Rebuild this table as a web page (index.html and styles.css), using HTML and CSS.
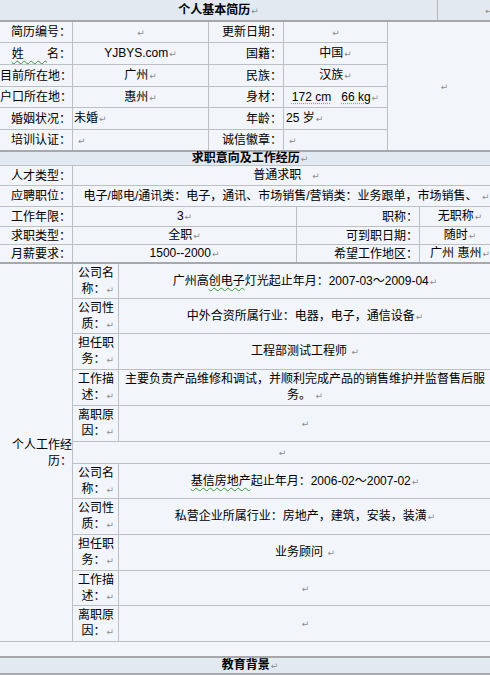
FILE: index.html
```html
<!DOCTYPE html>
<html lang="zh-CN">
<head>
<meta charset="utf-8">
<title>个人基本简历</title>
<link rel="stylesheet" href="styles.css">
</head>
<body>
<div class="doc">
  <div class="head head-first">
    <div class="head-main">个人基本简历<span class="pm">↵</span></div>
    <div class="head-side"><span class="pm">↵</span></div>
  </div>

  <div class="grid g1">
    <div class="c lbl"><p>简历编号：</p></div>
    <div class="c val"><p><span class="pm">↵</span></p></div>
    <div class="c lbl"><p>更新日期：</p></div>
    <div class="c val"><p><span class="pm">↵</span></p></div>
    <div class="c val photo"><p><span class="pm">↵</span></p></div>

    <div class="c lbl"><p><span class="wavy">姓&nbsp;&nbsp;&nbsp;&nbsp;&nbsp;&nbsp;&nbsp;</span>名：</p></div>
    <div class="c val"><p>YJBYS.com<span class="pm">↵</span></p></div>
    <div class="c lbl"><p>国籍：</p></div>
    <div class="c val"><p>中国<span class="pm">↵</span></p></div>

    <div class="c lbl"><p>目前所在地：</p></div>
    <div class="c val"><p>广州<span class="pm">↵</span></p></div>
    <div class="c lbl"><p>民族：</p></div>
    <div class="c val"><p>汉族<span class="pm">↵</span></p></div>

    <div class="c lbl"><p>户口所在地：</p></div>
    <div class="c val"><p>惠州<span class="pm">↵</span></p></div>
    <div class="c lbl"><p>身材：</p></div>
    <div class="c val"><p><span class="dotted">172 cm</span>&nbsp;&nbsp;&nbsp;<span class="dotted">66 kg</span><span class="pm">↵</span></p></div>

    <div class="c lbl"><p>婚姻状况：</p></div>
    <div class="c lft"><p>未婚<span class="pm">↵</span></p></div>
    <div class="c lbl"><p>年龄：</p></div>
    <div class="c lft lft-2"><p>25 岁<span class="pm">↵</span></p></div>

    <div class="c lbl"><p>培训认证：</p></div>
    <div class="c lft lft-4"><p><span class="pm">↵</span></p></div>
    <div class="c lbl"><p>诚信徽章：</p></div>
    <div class="c lft lft-4"><p><span class="pm">↵</span></p></div>
  </div>

  <div class="head head-mid">求职意向及工作经历<span class="pm">↵</span></div>

  <div class="grid g2">
    <div class="c lbl"><p>人才类型：</p></div>
    <div class="c val span3"><p>普通求职&nbsp;&nbsp;&nbsp;<span class="pm">↵</span></p></div>

    <div class="c lbl"><p>应聘职位：</p></div>
    <div class="c val span3"><p>电子/邮电/通讯类：电子，通讯、市场销售/营销类：业务跟单，市场销售、&nbsp;<span class="pm">↵</span></p></div>

    <div class="c lbl"><p>工作年限：</p></div>
    <div class="c val"><p>3<span class="pm">↵</span></p></div>
    <div class="c lbl"><p>职称：</p></div>
    <div class="c val"><p>无职称<span class="pm">↵</span></p></div>

    <div class="c lbl"><p>求职类型：</p></div>
    <div class="c val"><p>全职<span class="pm">↵</span></p></div>
    <div class="c lbl"><p>可到职日期：</p></div>
    <div class="c val"><p>随时<span class="pm">↵</span></p></div>

    <div class="c lbl"><p>月薪要求：</p></div>
    <div class="c val"><p>1500--2000<span class="pm">↵</span></p></div>
    <div class="c lbl"><p>希望工作地区：</p></div>
    <div class="c val"><p>广州 惠州<span class="pm">↵</span></p></div>
  </div>

  <div class="grid g3">
    <div class="c lbl wrap exp-label"><p>个人工作经历：</p></div>

    <div class="c sub"><p>公司名称：<span class="pm">↵</span></p></div>
    <div class="c val wrap wv"><p>广州高<span class="wavy">创电子</span>灯光起止年月：2007-03～2009-04<span class="pm">↵</span></p></div>
    <div class="c sub"><p>公司性质：<span class="pm">↵</span></p></div>
    <div class="c val wrap wv"><p>中外合资所属行业：电器，电子，通信设备<span class="pm">↵</span></p></div>
    <div class="c sub"><p>担任职务：<span class="pm">↵</span></p></div>
    <div class="c val wrap wv"><p>工程部测试工程师&nbsp;<span class="pm">↵</span></p></div>
    <div class="c sub"><p>工作描述：<span class="pm">↵</span></p></div>
    <div class="c val wrap wv"><p>主要负责产品维修和调试，并顺利完成产品的销售维护并监督售后服务。&nbsp;<span class="pm">↵</span></p></div>
    <div class="c sub"><p>离职原因：<span class="pm">↵</span></p></div>
    <div class="c val wrap wv"><p><span class="pm">↵</span></p></div>

    <div class="c val span2"><p><span class="pm">↵</span></p></div>

    <div class="c sub"><p>公司名称：<span class="pm">↵</span></p></div>
    <div class="c val wrap wv"><p><span class="wavy">基信房地产</span>起止年月：2006-02～2007-02<span class="pm">↵</span></p></div>
    <div class="c sub"><p>公司性质：<span class="pm">↵</span></p></div>
    <div class="c val wrap wv"><p>私营企业所属行业：房地产，建筑，安装，装潢<span class="pm">↵</span></p></div>
    <div class="c sub"><p>担任职务：<span class="pm">↵</span></p></div>
    <div class="c val wrap wv"><p>业务顾问&nbsp;<span class="pm">↵</span></p></div>
    <div class="c sub"><p>工作描述：<span class="pm">↵</span></p></div>
    <div class="c val wrap wv"><p><span class="pm">↵</span></p></div>
    <div class="c sub"><p>离职原因：<span class="pm">↵</span></p></div>
    <div class="c val wrap wv"><p><span class="pm">↵</span></p></div>
  </div>

  <div class="tail"></div>

  <div class="head head-last">教育背景<span class="pm">↵</span></div>
</div>
</body>
</html>
```

FILE: styles.css
```css
html, body {
  margin: 0;
  padding: 0;
}

body {
  width: 490px;
  height: 675px;
  overflow: hidden;
  background: #f2f5f9;
  color: #000;
  font-family: "Liberation Sans", "Noto Sans CJK SC", sans-serif;
  font-size: 12px;
  line-height: 16px;
}

p {
  margin: 0;
}

.doc {
  width: 500px;
}

/* paragraph marks */
.pm {
  font-family: "DejaVu Sans", sans-serif;
  font-size: 9px;
  color: #8e8e8e;
  margin-left: 1px;
  font-weight: normal;
}

.wavy {
  text-decoration: underline wavy #3a9a3a;
  text-decoration-thickness: 1px;
  text-underline-offset: 2px;
}

.dotted {
  text-decoration: underline dotted #e07a7a;
  text-underline-offset: 2px;
}

/* section headers */
.head {
  background: #e2e9f1;
  font-weight: bold;
  text-align: center;
}

.head-first {
  display: flex;
  height: 20px;
  line-height: 20px;
  border-bottom: 2px solid #a6a8ab;
}

.head-main {
  width: 437px;
  border-right: 1px solid #b4b7bb;
}

.head-side {
  flex: 1;
  text-align: left;
  padding-left: 46px;
}

.head-mid {
  height: 13px;
  line-height: 13px;
  border-top: 2px solid #a6a8ab;
  border-bottom: 1px solid #bfc3c8;
}

.head-last {
  height: 15px;
  line-height: 15px;
  border-top: 2px solid #a6a8ab;
  border-bottom: 2px solid #a6a8ab;
}

.tail {
  height: 14px;
}

/* grids */
.grid {
  display: grid;
  gap: 1px;
  background: #bcc0c5;
}

.c {
  background: #f2f5f9;
  display: flex;
  flex-direction: column;
  justify-content: center;
  white-space: nowrap;
  overflow: hidden;
}

.lbl {
  text-align: right;
  padding-right: 1px;
}

.val {
  text-align: center;
}

.lft {
  text-align: left;
  padding-left: 1px;
}

.lft-2 {
  padding-left: 2px;
}

.lft-4 {
  padding-left: 4px;
}

.wrap {
  white-space: normal;
}

.g1 {
  grid-template-columns: 72px 135px 74px 103px 112px;
  grid-template-rows: 20px 21px 21px 20px 21px 20px;
}

.photo {
  grid-column: 5;
  grid-row: 1 / span 6;
}

.g2 {
  grid-template-columns: 72px 223px 122px 80px;
  grid-template-rows: 19px 20px 19px 17px 17px;
}

.span3 {
  grid-column: 2 / span 3;
}

.g3 {
  width: 491px;
  border-top: 2px solid #a6a8ab;
  border-bottom: 1px solid #bcc0c5;
  grid-template-columns: 72px 45px 372px;
  grid-template-rows: 34px 34px 35px 35px 35px 21px 34px 35px 35px 34px 35px;
}

.exp-label {
  grid-column: 1;
  grid-row: 1 / span 11;
  padding-right: 0;
}

.sub {
  white-space: normal;
  text-align: right;
  padding: 0 4px;
}

.wv {
  padding: 0 4px;
}

.span2 {
  grid-column: 2 / span 2;
}
```
